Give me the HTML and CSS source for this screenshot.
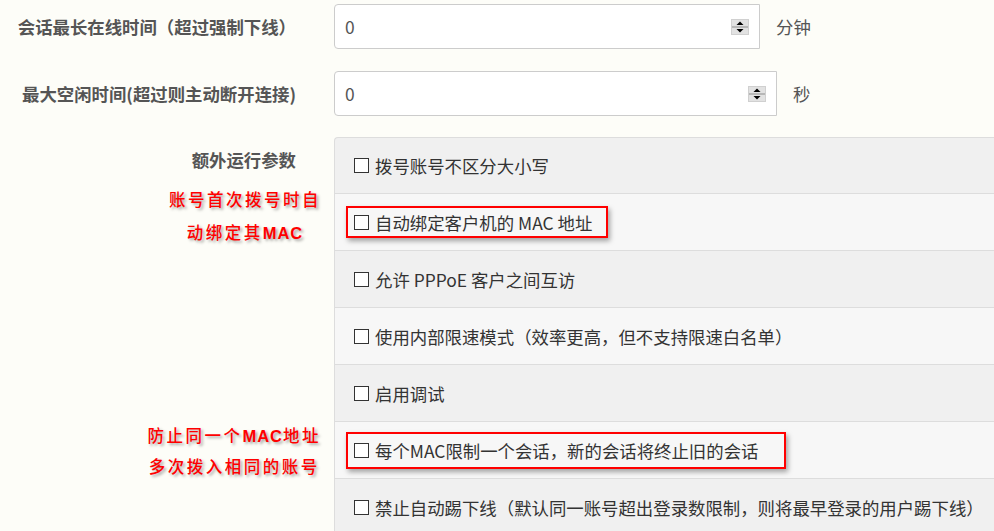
FILE: index.html
```html
<!DOCTYPE html>
<html lang="zh-CN">
<head>
    <meta charset="UTF-8">
    <meta name="viewport" content="width=device-width, initial-scale=1.0">
    <title>PPPoE 服务参数</title>
    <link rel="stylesheet" href="styles.css">
</head>
<body>
    <form class="cfg">
        <div class="field field-first">
            <label class="field-label">会话最长在线时间（超过强制下线）</label>
            <div class="field-ctl">
                <div class="num num-long">
                    <input type="text" value="0">
                    <svg class="spin" width="18" height="16" viewBox="0 0 18 16"><rect x="0.5" y="0.5" width="17" height="15" fill="#e2e2e2" stroke="#d0d0d0"/><rect x="1" y="7.5" width="16" height="1" fill="#8c8c8c"/><path d="M5.5 6h7L9 2.5z" fill="#000"/><path d="M5.5 10h7L9 13.5z" fill="#000"/></svg>
                </div>
                <span class="unit">分钟</span>
            </div>
        </div>

        <div class="field">
            <label class="field-label">最大空闲时间(超过则主动断开连接)</label>
            <div class="field-ctl">
                <div class="num num-wide">
                    <input type="text" value="0">
                    <svg class="spin" width="18" height="16" viewBox="0 0 18 16"><rect x="0.5" y="0.5" width="17" height="15" fill="#e2e2e2" stroke="#d0d0d0"/><rect x="1" y="7.5" width="16" height="1" fill="#8c8c8c"/><path d="M5.5 6h7L9 2.5z" fill="#000"/><path d="M5.5 10h7L9 13.5z" fill="#000"/></svg>
                </div>
                <span class="unit">秒</span>
            </div>
        </div>

        <!-- extra options, one grid row per checkbox -->
        <div class="extra">
            <div class="side side-title">额外运行参数</div>
            <div class="opt opt-top"><label><input type="checkbox">拨号账号不区分大小写</label></div>

            <div class="side"><p class="note note-a">账号首次拨号时自<br>动绑定其<b>MAC</b></p></div>
            <div class="opt"><label class="mark mark-a"><input type="checkbox">自动绑定客户机的 MAC 地址</label></div>

            <div class="side"></div>
            <div class="opt"><label><input type="checkbox">允许 PPPoE 客户之间互访</label></div>

            <div class="side"></div>
            <div class="opt"><label><input type="checkbox">使用内部限速模式（效率更高，但不支持限速白名单）</label></div>

            <div class="side"></div>
            <div class="opt"><label><input type="checkbox">启用调试</label></div>

            <div class="side"><p class="note note-b">防止同一个<b>MAC</b>地址<br>多次拨入相同的账号</p></div>
            <div class="opt"><label class="mark mark-b"><input type="checkbox">每个MAC限制一个会话，新的会话将终止旧的会话</label></div>

            <div class="side"></div>
            <div class="opt"><label><input type="checkbox">禁止自动踢下线（默认同一账号超出登录数限制，则将最早登录的用户踢下线）</label></div>
        </div>
    </form>
</body>
</html>
```

FILE: styles.css
```css
body {
    margin: 0;
    overflow: hidden;
    background: #fdfdf8;
    font-family: "Noto Sans CJK SC", "Liberation Sans", sans-serif;
    font-size: 17.4px;
    color: #333;
}

.cfg {
    margin: 0;
}

.field {
    display: grid;
    grid-template-columns: 296px 1fr;
    column-gap: 38px;
    align-items: center;
    height: 45px;
    margin-top: 22px;
}

.field-first {
    margin-top: 4px;
}

.field-label {
    text-align: right;
    font-weight: bold;
    color: #555;
    white-space: nowrap;
}

.field-ctl {
    display: flex;
    align-items: center;
    height: 100%;
}

.num {
    display: flex;
    align-items: center;
    box-sizing: border-box;
    height: 100%;
    background: #fff;
    border: 1px solid #ccc;
    border-radius: 4px 0 0 4px;
    padding: 0 10px 0 10px;
}

.num-long {
    width: 426px;
}

.num-wide {
    width: 443px;
}

.num input {
    flex: 1;
    min-width: 0;
    border: 0;
    outline: 0;
    padding: 0;
    background: transparent;
    font: inherit;
    color: #555;
}

.spin {
    display: block;
    flex: none;
}

.unit {
    margin-left: 16px;
    color: #555;
}

/* options list */
.extra {
    display: grid;
    grid-template-columns: 296px 1fr;
    column-gap: 38px;
    grid-auto-rows: 57px;
    margin-top: 21px;
}

.side {
    display: flex;
    align-items: center;
    justify-content: flex-end;
}

.side-title {
    align-items: flex-start;
    padding-top: 10px;
    font-weight: bold;
    color: #555;
}

.note {
    margin: 0 -25px 0 0;
    color: #f00;
    font-size: 16.5px;
    font-weight: 500;
    letter-spacing: 2.5px;
    text-align: center;
    text-shadow: 2px 2px 3px rgba(0, 0, 0, 0.35);
    white-space: nowrap;
}

.note b {
    font-family: "Liberation Sans", sans-serif;
    font-weight: bold;
    letter-spacing: 1px;
}

.note-a {
    line-height: 33px;
    margin-bottom: 12px;
}

.note-b {
    line-height: 30px;
}

.opt {
    display: flex;
    align-items: center;
    box-sizing: border-box;
    padding-left: 19px;
    border-left: 1px solid #ddd;
    border-bottom: 1px solid #ddd;
    background: #f0f0f0;
    white-space: nowrap;
}

.opt:nth-child(4n) {
    background: #f7f7f7;
}

.opt-top {
    border-top: 1px solid #ddd;
    border-top-left-radius: 4px;
}

.opt label {
    display: inline-flex;
    align-items: center;
}

.opt input[type="checkbox"] {
    appearance: none;
    -webkit-appearance: none;
    box-sizing: border-box;
    width: 15px;
    height: 15px;
    margin: 0 6px 0 0;
    border: 1px solid #333;
    background: #fff;
}

.mark {
    box-sizing: border-box;
    margin-left: -8px;
    padding-left: 6px;
    border: 2px solid #f00;
    box-shadow: 2px 3px 5px rgba(0, 0, 0, 0.35);
}

.mark-a {
    height: 32px;
    padding-right: 14px;
}

.mark-b {
    height: 37px;
    padding-right: 26px;
}
```
